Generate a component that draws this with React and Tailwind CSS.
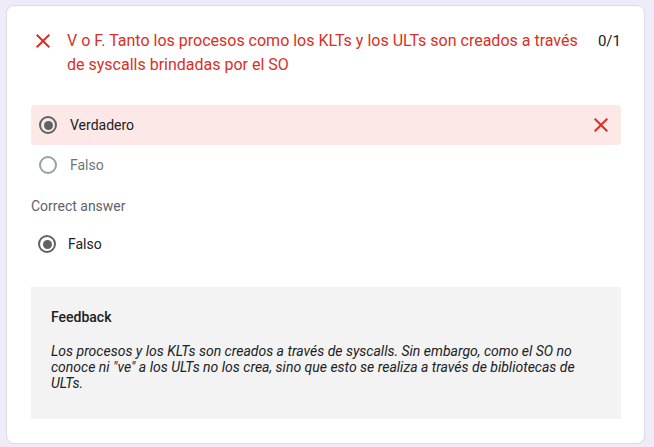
import React from 'react';

const CloseIcon = ({ className }) => (
  <svg viewBox="0 0 24 24" className={className} fill="currentColor">
    <path d="M19 6.41 17.59 5 12 10.59 6.41 5 5 6.41 10.59 12 5 17.59 6.41 19 12 13.41 17.59 19 19 17.59 13.41 12z" />
  </svg>
);

const Radio = ({ checked, muted }) => (
  <span
    className={
      'flex items-center justify-center w-[18px] h-[18px] rounded-full border-2 shrink-0 ' +
      (muted ? 'border-[#9aa0a6]' : 'border-[#5f6368]')
    }
  >
    {checked && <span className="w-[9px] h-[9px] rounded-full bg-[#5f6368]" />}
  </span>
);

const App = () => {
  return (
    <div className="bg-[#f0ebf8] min-h-screen pt-[5px] pl-[6px] pr-[9px] font-['Roboto',sans-serif]">
      <div className="bg-white border border-[#dadce0] rounded-lg h-[439px] pl-[24px] pr-[23px] pt-[23px]">
        {/* Question header */}
        <div className="flex items-start">
          <CloseIcon className="w-6 h-6 text-[#d93025] shrink-0" />
          <p className="ml-3 flex-1 text-[16px] leading-6 text-[#d93025] pr-4">
            V o F. Tanto los procesos como los KLTs y los ULTs son creados a través de syscalls brindadas por el SO
          </p>
          <span className="text-[15px] leading-6 text-[#202124]">0/1</span>
        </div>

        {/* Options */}
        <div className="mt-[28px]">
          <div className="flex items-center h-10 rounded bg-[#fce8e6] pl-2 pr-2">
            <Radio checked />
            <span className="ml-[13px] flex-1 text-sm text-[#202124]">Verdadero</span>
            <CloseIcon className="w-6 h-6 text-[#d93025]" />
          </div>
          <div className="flex items-center h-10 pl-2">
            <Radio muted />
            <span className="ml-[13px] text-sm text-[#70757a]">Falso</span>
          </div>
        </div>

        {/* Correct answer */}
        <p className="mt-[11px] text-sm leading-5 text-[#5f6368]">Correct answer</p>
        <div className="flex items-center h-10 pl-[7px] mt-[8px]">
          <Radio checked />
          <span className="ml-[12px] text-sm text-[#202124]">Falso</span>
        </div>

        {/* Feedback */}
        <div className="mt-[23px] bg-[#f3f3f3] pl-5 pr-5 pt-5 pb-[28px]">
          <p className="text-sm leading-5 font-medium text-[#202124]">Feedback</p>
          <p className="mt-4 text-sm leading-4 italic text-[#202124]">
            Los procesos y los KLTs son creados a través de syscalls. Sin embargo, como el SO no conoce ni "ve" a los ULTs no los crea, sino que esto se realiza a través de bibliotecas de ULTs.
          </p>
        </div>
      </div>
    </div>
  );
};

export default App;
